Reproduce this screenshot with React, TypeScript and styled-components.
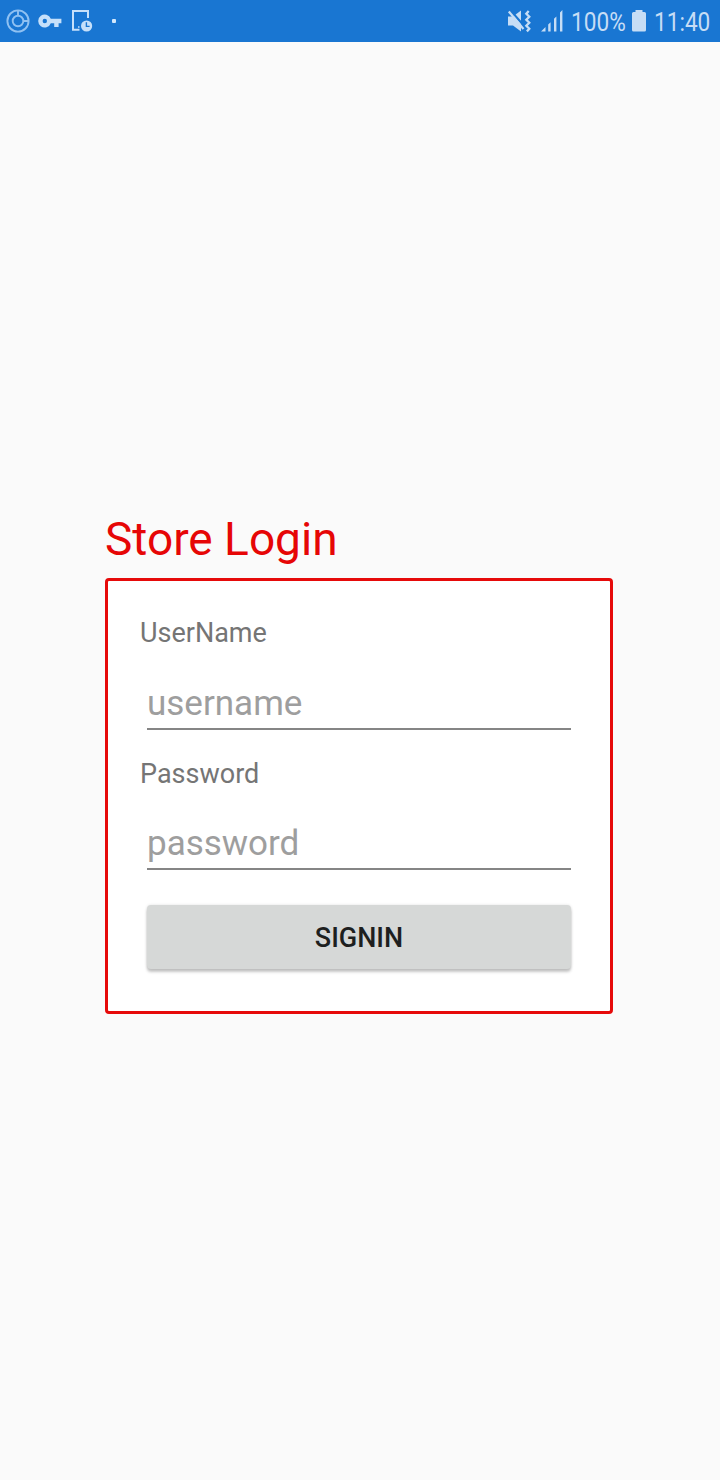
import React from 'react';
import styled, { createGlobalStyle } from 'styled-components';

const GlobalStyle = createGlobalStyle`
  * { box-sizing: border-box; }
  body { margin: 0; background: #fafafa; font-family: Roboto, "Liberation Sans", sans-serif; }
`;

const Screen = styled.div`
  display: flex;
  flex-direction: column;
  width: 720px;
  height: 1480px;
  background: #fafafa;
`;

const StatusBar = styled.header`
  display: flex;
  justify-content: space-between;
  height: 42px;
  flex: none;
  background: #1976d2;
  color: #c6ddf5;
`;

const StatusGroup = styled.div`
  display: flex;
  height: 42px;
`;

const StatusIcon = styled.svg<{ $width: number }>`
  display: block;
  flex: none;
  width: ${(p) => p.$width}px;
  height: 42px;
`;

const StatusText = styled.span<{ $width: number }>`
  flex: none;
  width: ${(p) => p.$width}px;
  font-size: 26px;
  line-height: 45px;
  white-space: nowrap;
  transform: scaleX(0.87);
  transform-origin: 0 50%;
`;

const Main = styled.main`
  display: flex;
  flex-direction: column;
  width: 508px;
  margin: 466px 0 0 105px;
`;

const Title = styled.h1`
  margin: 0;
  height: 70px;
  font-size: 46px;
  line-height: 62px;
  font-weight: 400;
  color: #e60606;
`;

const Card = styled.form`
  display: flex;
  flex-direction: column;
  height: 436px;
  padding: 36px 32px 0;
  border: 3px solid #e60a0a;
  border-radius: 4px;
  background: #fff;
`;

const Field = styled.div`
  display: flex;
  flex-direction: column;
  justify-content: space-between;
  height: 113px;
`;

const Fields = styled.div`
  display: flex;
  flex-direction: column;
  gap: 28px;
  height: 288px;
  ${Field} + ${Field} { height: 112px; }
`;

const Label = styled.label`
  font-size: 27px;
  line-height: 32px;
  color: #757575;
`;

const Input = styled.input`
  height: 58px;
  margin: 0 7px;
  padding: 6px 0 0;
  border: 0;
  border-bottom: 2px solid #858585;
  outline: 0;
  background: transparent;
  font: 35px/44px Roboto, "Liberation Sans", sans-serif;
  color: #212121;
  &::placeholder { color: #9e9e9e; opacity: 1; }
`;

const SignInButton = styled.button`
  height: 64px;
  margin: 0 7px;
  padding: 2px 0 0;
  border: 0;
  border-radius: 4px;
  background: #d6d8d7;
  box-shadow: 0 3px 3px rgba(0, 0, 0, 0.22), 0 0 3px rgba(0, 0, 0, 0.12);
  font: 500 27px/32px Roboto, "Liberation Sans", sans-serif;
  color: #1e1f1f;
`;

export default function App() {
  return (
    <Screen>
      <GlobalStyle />
      <StatusBar>
        <StatusGroup>
          <StatusIcon $width={36} viewBox="0 0 36 42" fill="none" stroke="#8fc1f2" strokeWidth="1.9">
            <circle cx="18" cy="21" r="10.6" />
            <circle cx="18" cy="21" r="5.3" />
            <path d="M18 10.4v5.3M23.3 21h5.3" />
          </StatusIcon>
          <StatusIcon $width={30} viewBox="36 0 30 42" fill="#c6e0fa">
            <path fillRule="evenodd" d="M50.8 18.8A6.5 6.5 0 1 0 50.8 23.2H54.2V27H58.6V23.2H61.4V18.8ZM44.8 18.8a2.2 2.2 0 1 1 0 4.4 2.2 2.2 0 0 1 0-4.4Z" />
          </StatusIcon>
          <StatusIcon $width={36} viewBox="66 0 36 42" fill="none" stroke="#c6e0fa" strokeWidth="2">
            <path d="M79.5 29.7H73V11h15v7" />
            <circle cx="86.6" cy="26" r="5.6" fill="#c6e0fa" stroke="none" />
            <path d="M86.4 22.3v4.1h3.2" stroke="#1976d2" strokeWidth="1.4" />
            <path d="M78 27h1.5" strokeWidth="1.5" />
          </StatusIcon>
          <StatusIcon $width={22} viewBox="102 0 22 42" fill="#d3e8fc">
            <rect x="112" y="19" width="4" height="4" rx="1" />
          </StatusIcon>
        </StatusGroup>
        <StatusGroup>
          <StatusIcon $width={34} viewBox="504 0 34 42" fill="#c6ddf5">
            <path d="M508 16.5h5l8-6v21l-8-6h-5Z" />
            <path d="M511 11 525 27" stroke="#1976d2" strokeWidth="2.2" />
            <path d="M508.8 11.5 523.5 29" stroke="#c6ddf5" strokeWidth="2.2" />
            <path d="m528.7 11-2.4 2.8 3 3-3 3 3 3-3 3 3 3-2.4 2.6" fill="none" stroke="#c6ddf5" strokeWidth="2.3" />
          </StatusIcon>
          <StatusIcon $width={33} viewBox="538 0 33 42" fill="#c6ddf5">
            <path d="M541 31.5l4.5-4.5v4.5ZM548.2 24.6l2.4-2.4v9.3h-2.4ZM554 18.8l2.4-2.4v15.1H554ZM560 12.5l2.4-2.4v21.4H560Z" />
          </StatusIcon>
          <StatusText $width={59}>100%</StatusText>
          <StatusIcon $width={24} viewBox="630 0 24 42" fill="#c6ddf5">
            <path d="M635.5 10h7v2h2a1.5 1.5 0 0 1 1.5 1.5V30a1.5 1.5 0 0 1-1.5 1.5h-11A1.5 1.5 0 0 1 632 30V13.5a1.5 1.5 0 0 1 1.5-1.5h2Z" />
          </StatusIcon>
          <StatusText $width={66}>11:40</StatusText>
        </StatusGroup>
      </StatusBar>
      <Main>
        <Title>Store Login</Title>
        <Card>
          <Fields>
            <Field>
              <Label htmlFor="username">UserName</Label>
              <Input id="username" placeholder="username" />
            </Field>
            <Field>
              <Label htmlFor="password">Password</Label>
              <Input id="password" type="password" placeholder="password" />
            </Field>
          </Fields>
          <SignInButton type="button">SIGNIN</SignInButton>
        </Card>
      </Main>
    </Screen>
  );
}
